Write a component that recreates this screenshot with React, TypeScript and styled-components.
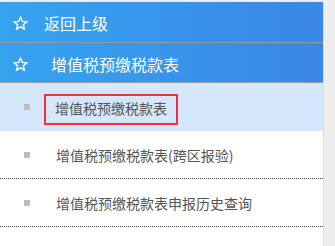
import React from "react";
import styled, { createGlobalStyle } from "styled-components";

const Global = createGlobalStyle`
  html, body { margin: 0; padding: 0; background: #eeeeee; }
  body { font-family: "Noto Sans CJK SC", "Noto Sans", sans-serif; }
`;

const Panel = styled.div`
  margin-top: 2px;
  width: 323px;
  height: 244px;
  background: #ffffff;
  border-right: 1px solid #dcdcdc;
`;

const Header = styled.div<{ $h: number }>`
  display: flex;
  align-items: center;
  height: ${(p) => p.$h}px;
  padding-left: 13px;
  background: linear-gradient(90deg, #36a3ef 0%, #3a87e6 100%);
  border-bottom: 1px solid #9a9a9a;
  color: #ffffff;
  font-size: 16px;
`;

const HeaderLabel = styled.span<{ $indent: number }>`
  margin-left: ${(p) => p.$indent}px;
  line-height: 1;
  padding-top: 2px;
`;

const StarIcon = styled.svg`
  width: 15px;
  height: 15px;
  flex: none;
  margin-top: 3px;
`;

const Item = styled.div<{ $selected?: boolean }>`
  display: flex;
  align-items: center;
  height: ${(p) => (p.$selected ? 48 : 47)}px;
  padding-left: 24px;
  background: ${(p) => (p.$selected ? "#d4e7fb" : "#ffffff")};
  border-bottom: ${(p) => (p.$selected ? "none" : "1px dotted #555555")};
  color: #555555;
  font-size: 14px;
`;

const Bullet = styled.span`
  width: 6px;
  height: 6px;
  background: #bdbdbd;
  flex: none;
`;

const ItemLabel = styled.span<{ $boxed?: boolean }>`
  margin-left: 14px;
  display: flex;
  align-items: center;
  height: 27px;
  padding: 0 9px 0 ${(p) => (p.$boxed ? 9 : 10)}px;
  border: 2px solid ${(p) => (p.$boxed ? "#f03535" : "transparent")};
  margin-top: ${(p) => (p.$boxed ? 4 : 0)}px;
  line-height: 1;
  white-space: nowrap;
`;

const ItemText = styled.span`
  margin-top: ${(p: { $shift?: number }) => p.$shift ?? 0}px;
`;

const Star = () => (
  <StarIcon viewBox="0 0 24 24" fill="none" stroke="#ffffff" strokeWidth="2.2" strokeLinejoin="miter">
    <polygon points="12,2 14.9,8.6 22,9.3 16.6,14 18.2,21 12,17.3 5.8,21 7.4,14 2,9.3 9.1,8.6" />
  </StarIcon>
);

export default function App() {
  return (
    <>
      <Global />
      <Panel>
        <Header $h={40}>
          <Star />
          <HeaderLabel $indent={16}>返回上级</HeaderLabel>
        </Header>
        <Header $h={39}>
          <Star />
          <HeaderLabel $indent={23}>增值税预缴税款表</HeaderLabel>
        </Header>
        <Item $selected>
          <Bullet />
          <ItemLabel $boxed>
            <ItemText $shift={-3}>增值税预缴税款表</ItemText>
          </ItemLabel>
        </Item>
        <Item>
          <Bullet />
          <ItemLabel>增值税预缴税款表(跨区报验)</ItemLabel>
        </Item>
        <Item>
          <Bullet />
          <ItemLabel>增值税预缴税款表申报历史查询</ItemLabel>
        </Item>
      </Panel>
    </>
  );
}
